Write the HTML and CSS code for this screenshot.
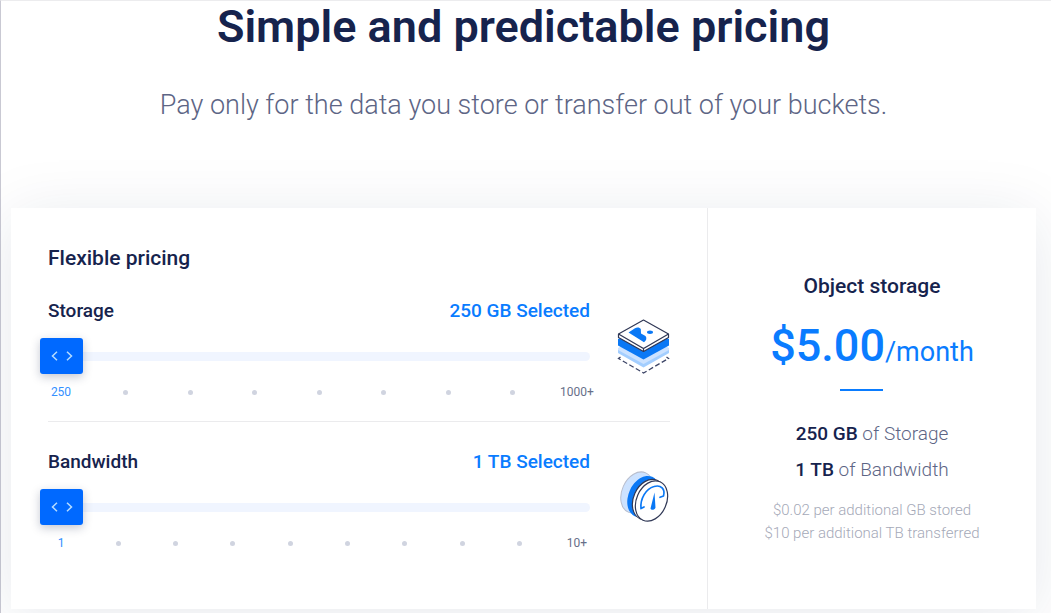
FILE: index.html
```html
<!DOCTYPE html>
<html lang="en">
<head>
<meta charset="utf-8">
<meta name="viewport" content="width=device-width, initial-scale=1">
<title>Simple and predictable pricing</title>
<link rel="stylesheet" href="styles.css">
</head>
<body>
<main class="page">
  <header class="intro">
    <h1 class="intro-title">Simple and predictable pricing</h1>
    <p class="intro-text">Pay only for the data you store or transfer out of your buckets.</p>
  </header>
  <div class="card">
    <section class="config">
      <h2 class="card-title">Flexible pricing</h2>
      <div class="usage">
        <div class="usage-main">
          <div class="usage-head">
            <label for="storage">Storage</label>
            <output class="selected" for="storage">250 GB Selected</output>
          </div>
          <input class="slider" id="storage" type="range" min="0" max="8" value="0">
          <ul class="ticks">
            <li class="tick-active">250</li>
            <li class="dot"></li><li class="dot"></li><li class="dot"></li><li class="dot"></li><li class="dot"></li><li class="dot"></li><li class="dot"></li>
            <li>1000+</li>
          </ul>
        </div>
        <svg class="usage-icon" viewBox="0 0 53 56" fill="none" aria-hidden="true">
          <path d="M3.500 38L1.500 39.500L26.500 54L51.500 39.500L49.500 38" stroke="#3d4567" stroke-width="1.300" stroke-dasharray="5 2.500"/>
          <path d="M1 29V34L26.500 48.500L52 34V29Z" fill="#a3ceff"/>
          <path d="M1 29L26.500 15L52 29V31L26.500 45L1 31Z" fill="#cce2ff"/>
          <path d="M1 20L26.500 10L52 20V26.500L26.500 40.500L1 26.500Z" fill="#0a78f5"/>
          <path d="M1.500 15L26.500 1L51.500 15V18.500L26.500 32.500L1.500 18.500Z" fill="#fff" stroke="#303856" stroke-width="1.200" stroke-linejoin="round"/>
          <path d="M1.500 15L26.500 29.500L51.500 15M26.500 29.500V32.500" stroke="#303856" stroke-width="1.200"/>
          <path d="M11.500 13.500L18 9.200C20 7.800 23 8.300 23.800 10L24 14.500L28.500 17C30 19 29.500 21.500 27 23.300Z" fill="#0a78f5"/>
          <ellipse cx="33" cy="13.200" rx="3" ry="1.700" fill="#0a78f5"/>
        </svg>
      </div>
      <div class="usage">
        <div class="usage-main">
          <div class="usage-head">
            <label for="bandwidth">Bandwidth</label>
            <output class="selected" for="bandwidth">1 TB Selected</output>
          </div>
          <input class="slider" id="bandwidth" type="range" min="1" max="10" value="1">
          <ul class="ticks">
            <li class="tick-active">1</li>
            <li class="dot"></li><li class="dot"></li><li class="dot"></li><li class="dot"></li><li class="dot"></li><li class="dot"></li><li class="dot"></li><li class="dot"></li>
            <li>10+</li>
          </ul>
        </div>
        <svg class="usage-icon" viewBox="0 0 53 56" fill="none" aria-hidden="true">
          <ellipse cx="20" cy="22.500" rx="15" ry="21.500" transform="rotate(24 20 22.500)" fill="#cce2ff" stroke="#b8bece"/>
          <ellipse cx="26.500" cy="26.500" rx="15" ry="21.500" transform="rotate(24 26.500 26.500)" fill="#0a78f5"/>
          <ellipse cx="31.500" cy="29.500" rx="15" ry="21" transform="rotate(24 31.500 29.500)" fill="#fff" stroke="#303856" stroke-width="1.200"/>
          <ellipse cx="34.500" cy="31" rx="15" ry="21" transform="rotate(24 34.500 31)" fill="#fff" stroke="#303856" stroke-width="1.200"/>
          <path d="M27 37L24 38.500C23 29 29 18.500 37 16.500C44 14.500 48.500 19 46.500 26L43 27.300" stroke="#0a78f5" stroke-width="1.700" stroke-linecap="round" stroke-linejoin="round"/>
          <path d="M37.500 22.500L38.500 37.500C38 40.200 34 40.500 33.500 38.500Z" fill="#0a78f5"/>
        </svg>
      </div>
    </section>
    <section class="summary">
      <h2 class="card-title">Object storage</h2>
      <p class="price"><strong class="amount">$5.00</strong>/month</p>
      <hr class="rule">
      <ul class="included">
        <li><strong>250 GB</strong> of Storage</li>
        <li><strong>1 TB</strong> of Bandwidth</li>
      </ul>
      <p class="extra">$0.02 per additional GB stored<br>$10 per additional TB transferred</p>
    </section>
  </div>
</main>
</body>
</html>
```

FILE: styles.css
```css
* {
  box-sizing: border-box;
}

body {
  margin: 0;
  background: #fff;
  color: #16234d;
  font-family: Roboto, "Liberation Sans", sans-serif;
  overflow: hidden;
}

h1, h2, p, ul {
  margin: 0;
  padding: 0;
}

ul {
  list-style: none;
}

.page {
  min-height: 100vh;
  padding: 0 15px 4px 10px;
  border-top: 1px solid #ececee;
  border-left: 1px solid #c9c9d3;
}

.intro {
  padding-bottom: 83px;
  text-align: center;
}

.intro-title {
  font-size: 45px;
  font-weight: 600;
  line-height: 52px;
}

.intro-text {
  margin-top: 32px;
  color: #5d6585;
  font-size: 27px;
  font-weight: 300;
  line-height: 40px;
}

.card {
  display: grid;
  grid-template-columns: minmax(0, 1fr) 329px;
  background: #fff;
  box-shadow: 0 8px 60px rgba(22, 35, 77, 0.1);
}

.config {
  padding: 36px 37px 58px;
}

.card-title {
  font-size: 21px;
  font-weight: 500;
  line-height: 28px;
}

.usage {
  display: flex;
  align-items: flex-start;
  gap: 27px;
  padding: 27px 0 21px;
}

.usage + .usage {
  padding: 28px 0 0;
  border-top: 1px solid #ebebed;
}

.usage-main {
  flex: 1;
}

.usage-head {
  display: flex;
  justify-content: space-between;
  margin-bottom: 15px;
  font-size: 19px;
  font-weight: 500;
  line-height: 24px;
}

.selected {
  color: #0a7cff;
}

.usage-icon {
  width: 53px;
  height: 56px;
  margin-top: 20px;
}

.slider {
  display: block;
  width: calc(100% + 8px);
  height: 36px;
  margin: 0 0 0 -8px;
  appearance: none;
  background: none;
}

.slider::-webkit-slider-runnable-track {
  height: 9px;
  border-radius: 5px;
  background: #f0f5ff;
}

.slider::-webkit-slider-thumb {
  width: 43px;
  height: 36px;
  margin-top: -14px;
  appearance: none;
  border-radius: 3px;
  background: #0069ff url("data:image/svg+xml,%3Csvg xmlns='http://www.w3.org/2000/svg' width='22' height='10' fill='none' stroke='%23b5dcff' stroke-width='1.500'%3E%3Cpath d='M6 .8L1.500 5L6 9.200M16 .8L20.500 5L16 9.200'/%3E%3C/svg%3E") center no-repeat;
  box-shadow: 0 3px 10px rgba(22, 35, 77, 0.25);
}

.ticks {
  display: flex;
  justify-content: space-between;
  margin: 10px -6px 0;
  color: #676f89;
  font-size: 12px;
  line-height: 16px;
}

.ticks li {
  display: flex;
  align-items: center;
  justify-content: center;
  width: 38px;
}

.ticks .tick-active {
  color: #3390ff;
}

.dot::before {
  content: "";
  width: 5px;
  height: 5px;
  border-radius: 50%;
  background: #d0d4e0;
}

.summary {
  padding-top: 64px;
  border-left: 1px solid #ebebed;
  text-align: center;
}

.price {
  margin-top: 18px;
  color: #0a7cff;
  font-size: 27px;
  line-height: 56px;
}

.amount {
  font-size: 45px;
  font-weight: 500;
}

.rule {
  width: 43px;
  height: 2px;
  margin: 9px auto 0;
  border: 0;
  background: #0a7cff;
}

.summary .rule {
  translate: -11px;
}

.included {
  margin-top: 25px;
  color: #5d6585;
  font-size: 19px;
  font-weight: 300;
  line-height: 36px;
}

.included strong {
  color: #16234d;
  font-weight: 500;
}

.extra {
  margin-top: 11px;
  color: #a5a9b8;
  font-size: 15px;
  font-weight: 300;
  line-height: 23px;
}
```
